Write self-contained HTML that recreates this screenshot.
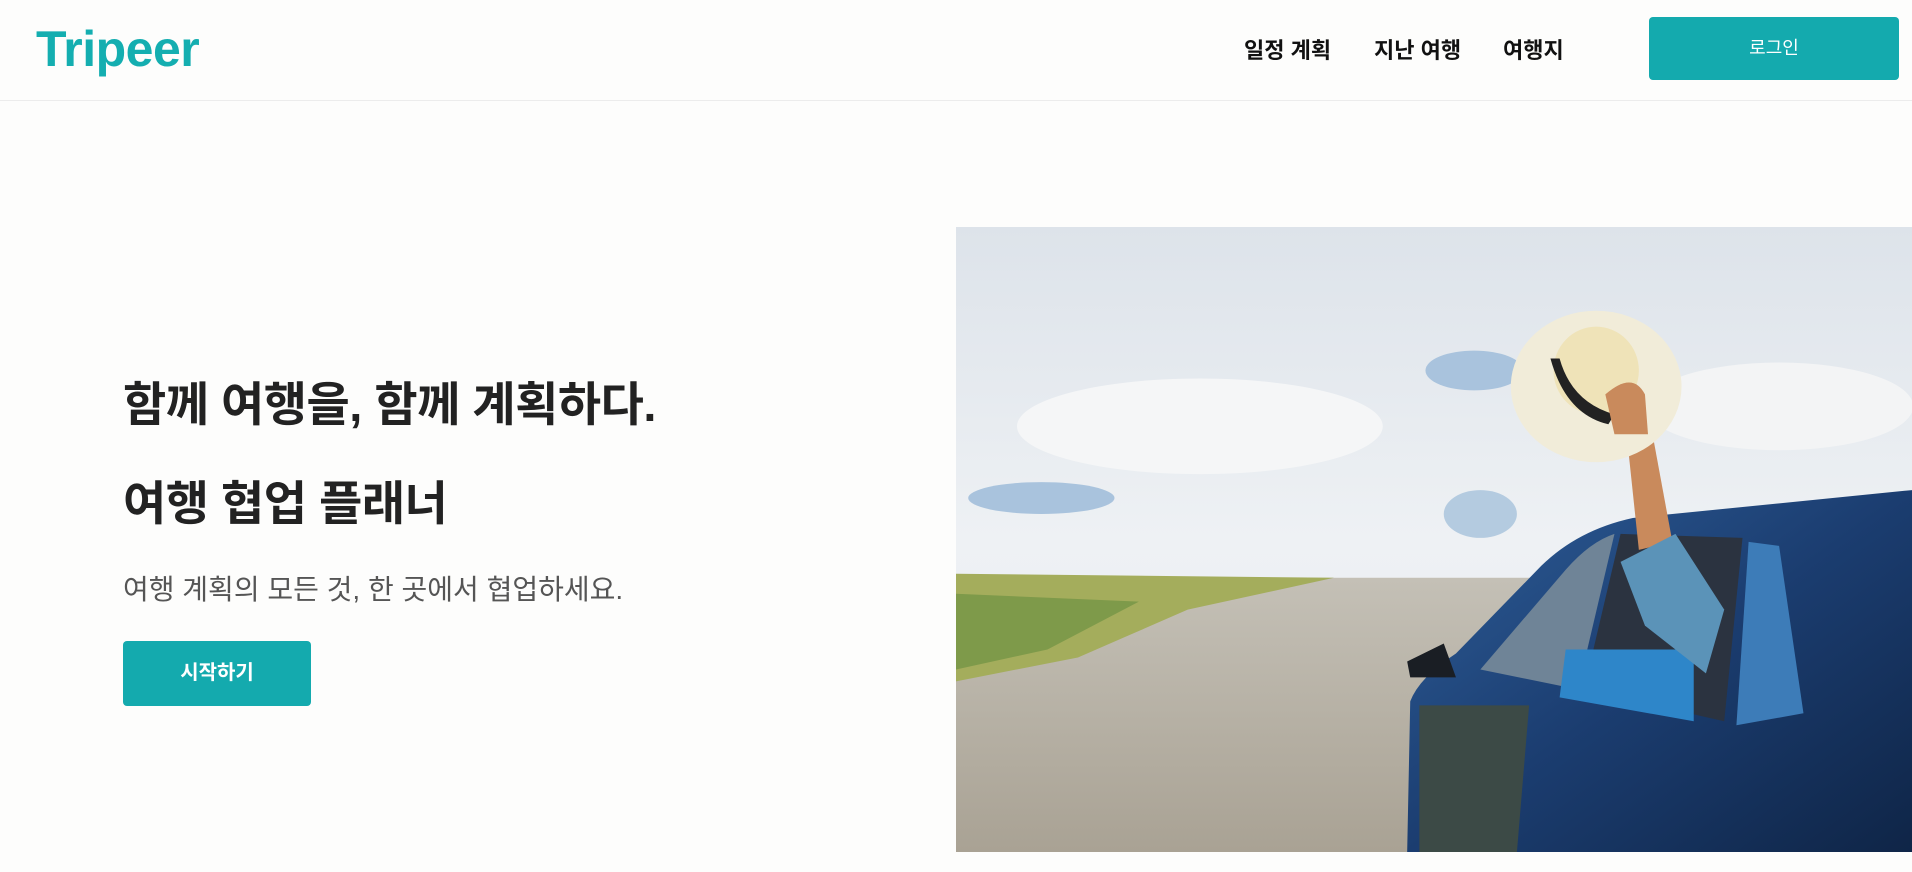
<!DOCTYPE html>
<html><head><meta charset="utf-8"><style>
*{margin:0;padding:0;box-sizing:border-box}
body{width:1912px;height:872px;background:#fdfdfc;font-family:"Liberation Sans","Noto Sans CJK KR",sans-serif;position:relative;overflow:hidden;color:#222}
.hdr{position:absolute;left:0;top:0;width:1912px;height:101px;border-bottom:1px solid #ececec}
.logo{position:absolute;left:36px;top:20px;font-size:50px;font-weight:700;color:#14aeb0;letter-spacing:-0.5px}
.nav{position:absolute;top:33px;font-size:22px;font-weight:700;color:#111}
.login{position:absolute;left:1649px;top:17px;width:250px;height:63px;background:#14aaae;border-radius:4px;color:#fff;font-size:18px;text-align:center;line-height:63px}
h1{position:absolute;left:123px;font-size:47px;line-height:1;font-weight:700;letter-spacing:-0.5px;color:#222;white-space:nowrap}
.sub{position:absolute;left:123px;top:576px;font-size:28px;line-height:1;color:#555;white-space:nowrap}
.btn{position:absolute;left:123px;top:641px;width:188px;height:65px;background:#14aaae;border-radius:4px;color:#fff;font-weight:700;font-size:20px;text-align:center;line-height:65px}
svg{position:absolute;left:956px;top:227px}
</style></head><body>
<div class="hdr">
<div class="logo">Tripeer</div>
<div class="nav" style="left:1244px">일정 계획</div>
<div class="nav" style="left:1374px">지난 여행</div>
<div class="nav" style="left:1503px">여행지</div>
<div class="login">로그인</div>
</div>
<h1 style="top:381px">함께 여행을, 함께 계획하다.</h1>
<h1 style="top:480px">여행 협업 플래너</h1>
<div class="sub">여행 계획의 모든 것, 한 곳에서 협업하세요.</div>
<div class="btn">시작하기</div>
<svg width="956" height="625" viewBox="0 0 1568 1568" preserveAspectRatio="none">
<defs>
<linearGradient id="sk" x1="0" y1="0" x2="0" y2="1"><stop offset="0" stop-color="#dde3ea"/><stop offset="0.5" stop-color="#eef1f4"/><stop offset="1" stop-color="#e6ebf0"/></linearGradient>
<linearGradient id="rd" x1="0" y1="0" x2="0" y2="1"><stop offset="0" stop-color="#c4c0b6"/><stop offset="1" stop-color="#a9a294"/></linearGradient>
<linearGradient id="car" x1="0" y1="0" x2="1" y2="1"><stop offset="0" stop-color="#2f5f9a"/><stop offset="0.5" stop-color="#1b3d70"/><stop offset="1" stop-color="#0f2547"/></linearGradient>
</defs>
<rect width="1568" height="1568" fill="url(#sk)"/>
<ellipse cx="850" cy="360" rx="80" ry="50" fill="#a9c3dd"/>
<ellipse cx="140" cy="680" rx="120" ry="40" fill="#a9c3dd"/>
<ellipse cx="860" cy="720" rx="60" ry="60" fill="#b4cbe0"/>
<ellipse cx="400" cy="500" rx="300" ry="120" fill="#f5f6f7"/>
<ellipse cx="1350" cy="450" rx="220" ry="110" fill="#f3f4f5"/>
<rect x="0" y="880" width="1568" height="688" fill="url(#rd)"/>
<path d="M0,870 L620,880 L380,960 L200,1080 L0,1140 Z" fill="#a4ad5c"/>
<path d="M0,920 L300,940 L150,1060 L0,1110 Z" fill="#7e9a4a"/>
<path d="M740,1568 L745,1190 Q760,1130 820,1070 L960,850 Q1020,760 1110,730 L1568,660 L1568,1568 Z" fill="url(#car)"/>
<path d="M860,1110 L1000,860 Q1040,790 1080,770 L1020,1160 Z" fill="#6f8497"/>
<path d="M1030,1160 L1090,770 L1290,780 L1260,1240 Z" fill="#2b3340"/>
<path d="M1000,1060 L1210,1060 L1210,1240 L990,1180 Z" fill="#2e86c9"/>
<path d="M1300,790 L1350,800 L1390,1220 L1280,1250 Z" fill="#3d7cb8"/>
<path d="M760,1200 L940,1200 L920,1568 L760,1568 Z" fill="#3c4a46"/>
<path d="M740,1090 L800,1045 L820,1130 L745,1130 Z" fill="#1a1e24"/>
<path d="M1100,520 L1140,500 L1175,790 L1120,810 Z" fill="#c98a5c"/>
<path d="M1090,840 L1180,770 L1260,960 L1230,1120 L1130,1000 Z" fill="#5b93b8"/>
<ellipse cx="1050" cy="400" rx="140" ry="190" fill="#f1ecd9"/>
<ellipse cx="1050" cy="360" rx="70" ry="110" fill="#efe3b8"/>
<path d="M975,330 Q1000,470 1070,495 L1080,470 Q1010,440 990,330 Z" fill="#222"/>
<path d="M1065,420 Q1110,360 1130,420 L1135,520 L1080,520 Z" fill="#c98a5c"/>
</svg>
</body></html>
